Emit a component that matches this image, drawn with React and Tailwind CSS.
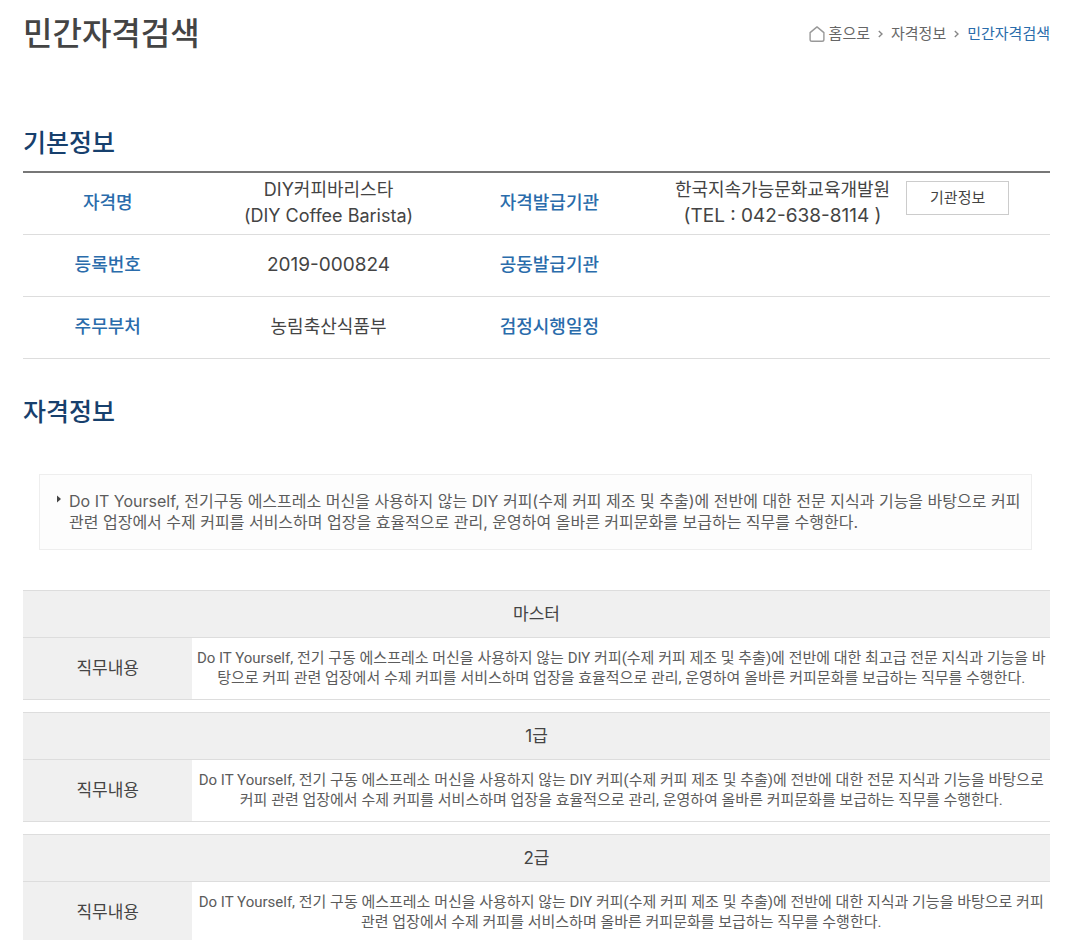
import React from 'react';

const GRADES = [
    {
        name: '마스터',
        duty: 'Do IT Yourself, 전기 구동 에스프레소 머신을 사용하지 않는 DIY 커피(수제 커피 제조 및 추출)에 전반에 대한 최고급 전문 지식과 기능을 바탕으로 커피 관련 업장에서 수제 커피를 서비스하며 업장을 효율적으로 관리, 운영하여 올바른 커피문화를 보급하는 직무를 수행한다.',
    },
    {
        name: '1급',
        duty: 'Do IT Yourself, 전기 구동 에스프레소 머신을 사용하지 않는 DIY 커피(수제 커피 제조 및 추출)에 전반에 대한 전문 지식과 기능을 바탕으로 커피 관련 업장에서 수제 커피를 서비스하며 업장을 효율적으로 관리, 운영하여 올바른 커피문화를 보급하는 직무를 수행한다.',
    },
    {
        name: '2급',
        duty: 'Do IT Yourself, 전기 구동 에스프레소 머신을 사용하지 않는 DIY 커피(수제 커피 제조 및 추출)에 전반에 대한 지식과 기능을 바탕으로 커피 관련 업장에서 수제 커피를 서비스하며 올바른 커피문화를 보급하는 직무를 수행한다.',
    },
];

const HomeIcon = () => (
    <svg className="w-4 h-4 text-[#999]" viewBox="0 0 16 16" fill="none" stroke="currentColor" strokeWidth="1.4" strokeLinejoin="round">
        <path d="M8 0.9 L14.9 6.6 V13.4 Q14.9 15.2 13.1 15.2 H2.9 Q1.1 15.2 1.1 13.4 V6.6 Z" />
    </svg>
);

const Chevron = () => (
    <svg className="w-[5px] h-2 text-[#888]" viewBox="0 0 5 8" fill="none" stroke="currentColor" strokeWidth="1.4">
        <path d="M0.8 1 L4 4 L0.8 7" />
    </svg>
);

const SectionTitle = ({ children }) => (
    <h2 className="text-[25px] leading-8 font-medium text-[#17406d]">{children}</h2>
);

const InfoHead = ({ children }) => (
    <th scope="row" className="font-medium text-[#2a6cab]">{children}</th>
);

const GradeTable = ({ name, duty }) => (
    <table className="w-full table-fixed border-collapse text-center text-[#444]">
        <colgroup>
            <col className="w-[16.5%]" />
            <col />
        </colgroup>
        <thead>
            <tr className="h-[47px] border-y border-[#ddd] bg-[#f0f0f0]">
                <th colSpan={2} scope="colgroup" className="text-[17px] leading-6 font-normal">{name}</th>
            </tr>
        </thead>
        <tbody>
            <tr className="h-[62px] border-b border-[#ddd]">
                <th scope="row" className="bg-[#f0f0f0] text-[17px] leading-6 font-normal">직무내용</th>
                <td className="font-['Roboto','Noto_Sans_CJK_KR',sans-serif] text-[15px] leading-5 text-[#5c5c5c]">{duty}</td>
            </tr>
        </tbody>
    </table>
);

const App = () => {
    return (
        <main className="bg-white pt-3 pl-[23px] pr-[30px] font-['Inter','Noto_Sans_CJK_KR',sans-serif] text-[#444]">
            {/* Title + breadcrumb */}
            <header className="flex items-center justify-between">
                <h1 className="text-[32px] leading-[44px] font-medium">민간자격검색</h1>
                <nav aria-label="breadcrumb" className="flex items-center gap-2 text-[15px] leading-5 text-[#666]">
                    <a href="#home" className="flex items-center gap-1">
                        <HomeIcon />
                        홈으로
                    </a>
                    <Chevron />
                    <a href="#info">자격정보</a>
                    <Chevron />
                    <a href="#search" aria-current="page" className="text-[#2a6cab]">민간자격검색</a>
                </nav>
            </header>

            {/* Basic info */}
            <section className="pt-[71px]">
                <SectionTitle>기본정보</SectionTitle>
                <table className="mt-3 w-full table-fixed border-collapse border-t-2 border-[#777] text-center text-lg leading-[26px]">
                    <colgroup>
                        <col className="w-[16.5%]" />
                        <col className="w-[26.5%]" />
                        <col className="w-[16.5%]" />
                        <col />
                    </colgroup>
                    <tbody>
                        <tr className="h-[62px] border-b border-[#ddd]">
                            <InfoHead>자격명</InfoHead>
                            <td>DIY커피바리스타<br />(DIY Coffee Barista)</td>
                            <InfoHead>자격발급기관</InfoHead>
                            <td>
                                <div className="flex items-start justify-center gap-4">
                                    <p>한국지속가능문화교육개발원<br /><span className="text-[19px]">(TEL : 042-638-8114 )</span></p>
                                    <button type="button" className="mt-1 h-[34px] w-[103px] border border-[#ccc] bg-white text-[15px] leading-5">
                                        기관정보
                                    </button>
                                </div>
                            </td>
                        </tr>
                        <tr className="h-[62px] border-b border-[#ddd]">
                            <InfoHead>등록번호</InfoHead>
                            <td className="text-[19px]">2019-000824</td>
                            <InfoHead>공동발급기관</InfoHead>
                            <td></td>
                        </tr>
                        <tr className="h-[62px] border-b border-[#ddd]">
                            <InfoHead>주무부처</InfoHead>
                            <td>농림축산식품부</td>
                            <InfoHead>검정시행일정</InfoHead>
                            <td></td>
                        </tr>
                    </tbody>
                </table>
            </section>

            {/* Qualification info */}
            <section className="pt-[37px]">
                <SectionTitle>자격정보</SectionTitle>
                <div className="mt-[46px] ml-4 mr-[18px] flex items-start gap-2 border border-[#eee] bg-[#fdfdfd] py-4 pl-[17px] pr-2">
                    <svg className="mt-1 h-2 w-1 shrink-0 text-[#444]" viewBox="0 0 4 8" fill="currentColor">
                        <path d="M0 0.5 L4 4 L0 7.5 Z" />
                    </svg>
                    <p className="text-base leading-[21px] text-[#5c5c5c]">
                        Do IT Yourself, 전기구동 에스프레소 머신을 사용하지 않는 DIY 커피(수제 커피 제조 및 추출)에 전반에 대한 전문 지식과 기능을 바탕으로 커피 관련 업장에서 수제 커피를 서비스하며 업장을 효율적으로 관리, 운영하여 올바른 커피문화를 보급하는 직무를 수행한다.
                    </p>
                </div>

                <div className="mt-10 flex flex-col gap-3">
                    {GRADES.map((grade) => (
                        <GradeTable key={grade.name} {...grade} />
                    ))}
                </div>
            </section>
        </main>
    );
};

export default App;
